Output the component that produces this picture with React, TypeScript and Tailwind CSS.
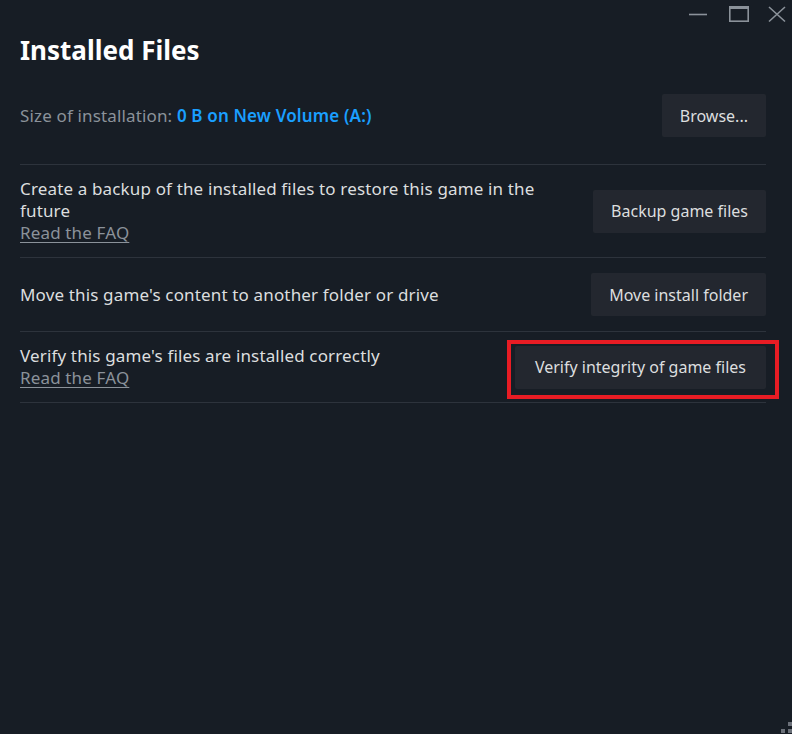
import { ReactNode } from 'react'

function WindowControls() {
  return (
    <div className="absolute top-0 right-0 flex items-start">
      <svg width="40" height="28" viewBox="0 0 40 28" className="text-[#8b929a]">
        <path d="M9 14.5h18" stroke="currentColor" strokeWidth="1.6" />
      </svg>
      <svg width="40" height="28" viewBox="0 0 40 28" className="text-[#8b929a]">
        <rect x="9.8" y="6.8" width="18.4" height="14.4" fill="none" stroke="currentColor" strokeWidth="1.6" />
        <path d="M9 7.5h20" stroke="currentColor" strokeWidth="3" />
      </svg>
      <svg width="28" height="28" viewBox="0 0 28 28" className="mr-[4px] text-[#8b929a]">
        <path d="M9 7l16 14.5M25 7l-16 14.5" stroke="currentColor" strokeWidth="1.6" />
      </svg>
    </div>
  )
}

function SteamButton({ children, className = '' }: { children: ReactNode; className?: string }) {
  return (
    <button
      type="button"
      className={`h-[43px] shrink-0 rounded-[2px] bg-[#23272f] px-[18px] text-[16px] tracking-normal text-[#dcdedf] ${className}`}
    >
      {children}
    </button>
  )
}

function FaqLink() {
  return <div className="text-[#8b929a] underline underline-offset-[3px] decoration-[#8b929a]">Read the FAQ</div>
}

export default function App() {
  return (
    <div
      className="relative h-[734px] w-[792px] overflow-hidden bg-[#171d25] pl-[20px] pr-[26px] text-[17px] leading-[22px] tracking-[0.15px] text-[#dcdedf]"
      style={{ fontFamily: '"Noto Sans", "Open Sans", sans-serif' }}
    >
      <WindowControls />

      <h1 className="pt-[34px] text-[26px] font-bold leading-[32px] tracking-normal text-white">Installed Files</h1>

      <div className="mt-[28px] flex items-center justify-between pb-[27px]">
        <div className="text-[#8b929a]">
          Size of installation:{' '}
          <span className="font-semibold text-[#1a9fff]">0 B on New Volume (A:)</span>
        </div>
        <SteamButton>Browse...</SteamButton>
      </div>

      <div className="flex items-center justify-between border-t border-[#2d333c] py-[13px]">
        <div className="w-[545px]">
          <div>Create a backup of the installed files to restore this game in the future</div>
          <FaqLink />
        </div>
        <SteamButton>Backup game files</SteamButton>
      </div>

      <div className="flex items-center justify-between border-t border-[#2d333c] py-[15px]">
        <div>Move this game's content to another folder or drive</div>
        <SteamButton className="h-[41px]">Move install folder</SteamButton>
      </div>

      <div className="flex items-center justify-between border-t border-b border-[#2d333c] py-[13px]">
        <div>
          <div>Verify this game's files are installed correctly</div>
          <FaqLink />
        </div>
        <div className="relative">
          <SteamButton className="px-[20px]">Verify integrity of game files</SteamButton>
          <span className="pointer-events-none absolute -left-[8px] -right-[13px] -top-[6px] -bottom-[10px] border-[4px] border-[#e81c24]" />
        </div>
      </div>

      <svg width="12" height="12" viewBox="0 0 12 12" className="absolute right-0 bottom-0">
        <rect x="8" y="0" width="4" height="4" fill="#6b7079" />
        <rect x="1" y="7" width="4" height="4" fill="#6b7079" />
        <rect x="8" y="7" width="4" height="4" fill="#6b7079" />
      </svg>
    </div>
  )
}
